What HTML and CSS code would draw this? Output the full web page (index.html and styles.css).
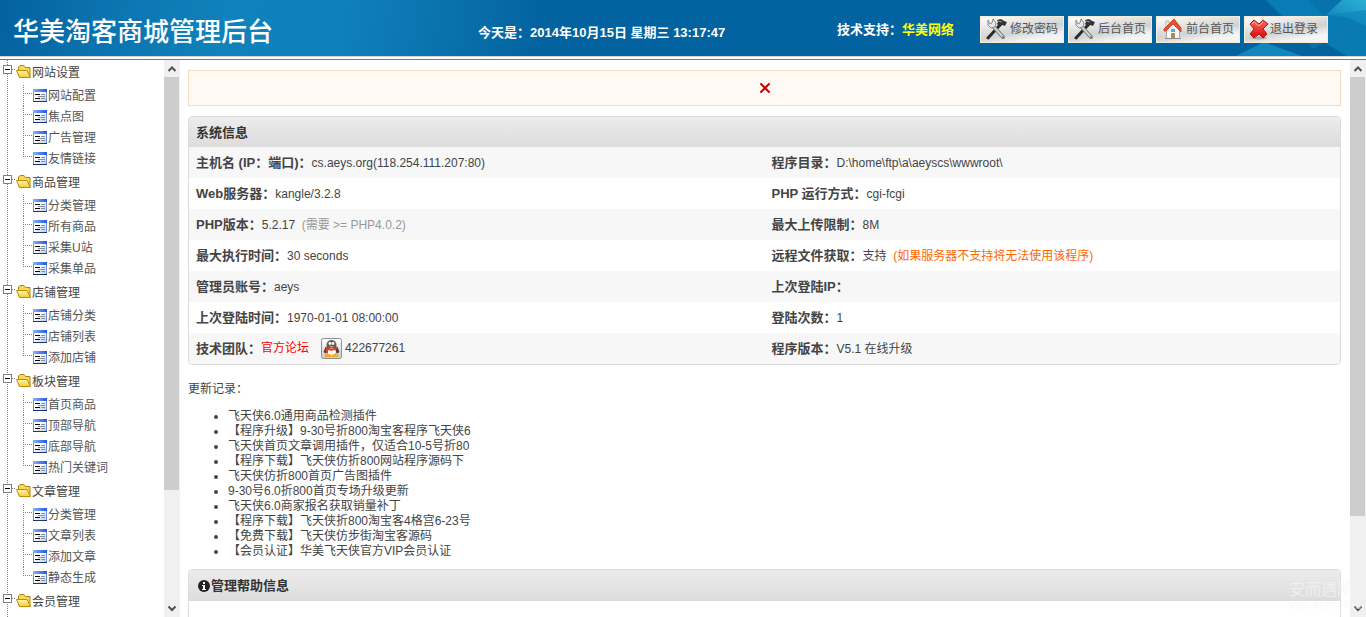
FILE: index.html
```html
<!DOCTYPE html>
<html lang="zh-CN">
<head>
<meta charset="utf-8">
<title>华美淘客商城管理后台</title>
<link rel="stylesheet" href="styles.css">
</head>
<body>
<svg class="defs" aria-hidden="true">
  <defs>
    <linearGradient id="gold" x1="0" y1="0" x2="0" y2="1"><stop offset="0" stop-color="#fffab4"/><stop offset="1" stop-color="#f8c830"/></linearGradient>
    <linearGradient id="bar" x1="0" y1="0" x2="1" y2="0"><stop offset="0" stop-color="#86b4fa"/><stop offset="1" stop-color="#2458e0"/></linearGradient>
    <linearGradient id="page" x1="0" y1="0" x2="1" y2="1"><stop offset="0.4" stop-color="#fff"/><stop offset="1" stop-color="#b8cdf0"/></linearGradient>
    <linearGradient id="red" x1="0" y1="0" x2="0" y2="1"><stop offset="0" stop-color="#ff6a60"/><stop offset="1" stop-color="#d80808"/></linearGradient>
    <linearGradient id="key" x1="0" y1="0" x2="0" y2="1"><stop offset="0" stop-color="#fff"/><stop offset="1" stop-color="#c9c9c9"/></linearGradient>
    <linearGradient id="ray" x1="1" y1="0" x2="0" y2="1"><stop offset="0" stop-color="#2bb0d6"/><stop offset="1" stop-color="#0c80b8"/></linearGradient>
  </defs>
  <symbol id="folder" viewBox="0 0 32 20">
    <path d="M12 7.500h4" stroke="#808080" stroke-dasharray="1 1"/>
    <rect x="3.500" y="3.500" width="8" height="8" fill="#fff" stroke="#808080"/>
    <path d="M5 7.500h5" stroke="#000"/>
    <path d="M18.500 14V5l1.500-1.500h4l1.500 2h4.500V15z" fill="#f8d858" stroke="#b08410"/>
    <path d="M19.500 15.500L16.500 8.500h10.500l3.500 7z" fill="url(#gold)" stroke="#c08c08" stroke-linejoin="round"/>
  </symbol>
  <symbol id="leaf" viewBox="0 0 48 21">
    <path d="M25 8.500h8" stroke="#808080" stroke-dasharray="1 1"/>
    <rect x="33.500" y="4.500" width="13" height="12" fill="url(#page)" stroke="#6f92cf"/>
    <rect x="33" y="4" width="14" height="3" fill="url(#bar)"/>
    <path d="M35 9.500h5M35 13.500h5" stroke="#000"/>
    <path d="M41 9.500h4M38 11.500h7M41 13.500h4" stroke="#8a8f98"/>
    <path d="M33 16.500h14" stroke="#1d3567"/>
  </symbol>
  <symbol id="tools" viewBox="0 0 22 22">
    <path d="M2 20L14 7" stroke="#2a2a2a" stroke-width="3" stroke-linecap="round"/>
    <path d="M11 2c3-1 5-1 7 1l3 1-2 4-3-1-2 2-3-3 1-2z" fill="#333"/>
    <path d="M12 3l4 1" stroke="#999"/>
    <path d="M6 7l11 12" stroke="#777" stroke-width="4" stroke-linecap="round"/>
    <path d="M6 7l11 12" stroke="#d2d2d2" stroke-width="2" stroke-linecap="round"/>
    <path d="M2 2v5l3 3 4-1 1-4-3-4-1 4-2 1z" fill="#e9e9e9" stroke="#8c8c8c"/>
    <circle cx="17" cy="19" r="1" fill="#777"/>
  </symbol>
  <symbol id="home" viewBox="0 0 22 22">
    <path d="M4 3h3v6H4z" fill="#e9e9e9" stroke="#b8b8b8"/>
    <path d="M4.500 11L12 5l5.500 6v9.500h-13z" fill="#f7f7f7" stroke="#a9a9a9"/>
    <path d="M2 13v-2L12 1l7 9v4l-8-8-7 7z" fill="#e8502e" stroke="#c94a2c" stroke-linejoin="round"/>
    <path d="M9 11h4v3H9z" fill="#58a8e8"/>
    <path d="M9 15h4v5H9z" fill="#b88850"/>
    <path d="M3 20.500h16" stroke="#8e8e8e"/>
  </symbol>
  <symbol id="cross" viewBox="0 0 22 22">
    <ellipse cx="11" cy="20" rx="8" ry="1.500" fill="#aaa"/>
    <path d="M2 6l4-4 5 4 4-4 5 4-5 5 4 5-4 4-4-4-5 4-4-4 4-5z" fill="url(#red)" stroke="#b81414" stroke-linejoin="round"/>
    <path d="M4 6l2-2 5 4 4-4" fill="none" stroke="#ffaca4"/>
  </symbol>
  <symbol id="up" viewBox="0 0 16 17"><path d="M4.500 11L8 7.500l3.500 3.500" fill="none" stroke="#505050" stroke-width="2"/></symbol>
  <symbol id="down" viewBox="0 0 16 17"><path d="M4.500 6.500L8 10l3.500-3.500" fill="none" stroke="#505050" stroke-width="2"/></symbol>
</svg>

<header class="top">
  <svg class="top-art" viewBox="0 0 160 56" preserveAspectRatio="xMaxYMid slice" aria-hidden="true">
    <path d="M60 0h100v56h-46z" fill="#0a78b0" opacity=".75"/>
    <path d="M60 0h42l17 16-14 26z" fill="#0d84bb" opacity=".6"/>
    <path d="M136 0h24v26l-20-9-20-2z" fill="url(#ray)"/>
    <path d="M119 15l41-5v46h-18L118 42l-14-12z" fill="#0d80b6" opacity=".6"/>
    <path d="M30 56l28-14 38 14z" fill="#1590c0" opacity=".8"/>
    <path d="M98 56l20-14 22 14z" fill="#0362a0"/>
  </svg>
  <h1 class="brand">华美淘客商城管理后台</h1>
  <p class="clock">今天是：2014年10月15日 星期三 13:17:47</p>
  <p class="support">技术支持：<a href="#">华美网络</a></p>
  <nav class="actions">
    <button type="button" class="action"><svg class="action-icon"><use href="#tools"/></svg>修改密码</button>
    <button type="button" class="action"><svg class="action-icon"><use href="#tools"/></svg>后台首页</button>
    <button type="button" class="action"><svg class="action-icon"><use href="#home"/></svg>前台首页</button>
    <button type="button" class="action action-exit"><svg class="action-icon"><use href="#cross"/></svg>退出登录</button>
  </nav>
</header>

<div class="frames">
  <nav class="side">
    <ul class="tree">
      <li><a class="group" href="#"><svg class="group-icon"><use href="#folder"/></svg><span>网站设置</span></a>
        <ul class="leaves">
          <li><a href="#"><svg class="leaf-icon"><use href="#leaf"/></svg><span>网站配置</span></a></li>
          <li><a href="#"><svg class="leaf-icon"><use href="#leaf"/></svg><span>焦点图</span></a></li>
          <li><a href="#"><svg class="leaf-icon"><use href="#leaf"/></svg><span>广告管理</span></a></li>
          <li><a href="#"><svg class="leaf-icon"><use href="#leaf"/></svg><span>友情链接</span></a></li>
        </ul></li>
      <li><a class="group" href="#"><svg class="group-icon"><use href="#folder"/></svg><span>商品管理</span></a>
        <ul class="leaves">
          <li><a href="#"><svg class="leaf-icon"><use href="#leaf"/></svg><span>分类管理</span></a></li>
          <li><a href="#"><svg class="leaf-icon"><use href="#leaf"/></svg><span>所有商品</span></a></li>
          <li><a href="#"><svg class="leaf-icon"><use href="#leaf"/></svg><span>采集U站</span></a></li>
          <li><a href="#"><svg class="leaf-icon"><use href="#leaf"/></svg><span>采集单品</span></a></li>
        </ul></li>
      <li><a class="group" href="#"><svg class="group-icon"><use href="#folder"/></svg><span>店铺管理</span></a>
        <ul class="leaves">
          <li><a href="#"><svg class="leaf-icon"><use href="#leaf"/></svg><span>店铺分类</span></a></li>
          <li><a href="#"><svg class="leaf-icon"><use href="#leaf"/></svg><span>店铺列表</span></a></li>
          <li><a href="#"><svg class="leaf-icon"><use href="#leaf"/></svg><span>添加店铺</span></a></li>
        </ul></li>
      <li><a class="group" href="#"><svg class="group-icon"><use href="#folder"/></svg><span>板块管理</span></a>
        <ul class="leaves">
          <li><a href="#"><svg class="leaf-icon"><use href="#leaf"/></svg><span>首页商品</span></a></li>
          <li><a href="#"><svg class="leaf-icon"><use href="#leaf"/></svg><span>顶部导航</span></a></li>
          <li><a href="#"><svg class="leaf-icon"><use href="#leaf"/></svg><span>底部导航</span></a></li>
          <li><a href="#"><svg class="leaf-icon"><use href="#leaf"/></svg><span>热门关键词</span></a></li>
        </ul></li>
      <li><a class="group" href="#"><svg class="group-icon"><use href="#folder"/></svg><span>文章管理</span></a>
        <ul class="leaves">
          <li><a href="#"><svg class="leaf-icon"><use href="#leaf"/></svg><span>分类管理</span></a></li>
          <li><a href="#"><svg class="leaf-icon"><use href="#leaf"/></svg><span>文章列表</span></a></li>
          <li><a href="#"><svg class="leaf-icon"><use href="#leaf"/></svg><span>添加文章</span></a></li>
          <li><a href="#"><svg class="leaf-icon"><use href="#leaf"/></svg><span>静态生成</span></a></li>
        </ul></li>
      <li><a class="group" href="#"><svg class="group-icon"><use href="#folder"/></svg><span>会员管理</span></a></li>
    </ul>
    <div class="scroll" aria-hidden="true">
      <svg class="scroll-arrow"><use href="#up"/></svg>
      <div class="scroll-track"><div class="scroll-thumb" style="height:79%"></div></div>
      <svg class="scroll-arrow"><use href="#down"/></svg>
    </div>
  </nav>

  <div class="content">
    <main class="main">
      <div class="notice"><svg class="notice-icon" viewBox="0 0 12 12" role="img" aria-label="关闭"><path d="M2 2l8 8M10 2L2 10" stroke="#c00" stroke-width="2" stroke-linecap="round" fill="none"/></svg></div>

      <section class="panel">
        <h2 class="panel-head">系统信息</h2>
        <table class="info">
          <tr><td><b>主机名 (IP：端口)：</b>cs.aeys.org(118.254.111.207:80)</td><td><b>程序目录：</b>D:\home\ftp\a\aeyscs\wwwroot\</td></tr>
          <tr><td><b>Web服务器：</b>kangle/3.2.8</td><td><b>PHP 运行方式：</b>cgi-fcgi</td></tr>
          <tr><td><b>PHP版本：</b>5.2.17 &nbsp;<span class="muted">(需要 &gt;= PHP4.0.2)</span></td><td><b>最大上传限制：</b>8M</td></tr>
          <tr><td><b>最大执行时间：</b>30 seconds</td><td><b>远程文件获取：</b>支持 &nbsp;<span class="warn">(如果服务器不支持将无法使用该程序)</span></td></tr>
          <tr><td><b>管理员账号：</b>aeys</td><td><b>上次登陆IP：</b></td></tr>
          <tr><td><b>上次登陆时间：</b>1970-01-01 08:00:00</td><td><b>登陆次数：</b>1</td></tr>
          <tr><td><div class="team"><b>技术团队：</b><a class="forum" href="#">官方论坛</a>
            <a class="qq" href="#"><svg class="qq-icon" viewBox="0 0 21 21" aria-hidden="true">
              <rect x=".5" y=".5" width="20" height="20" rx="2" fill="url(#key)" stroke="#8e8e8e"/>
              <path d="M5 9l-2 5 2 1M16 9l2 5-2 1" fill="#444" stroke="#444"/>
              <ellipse cx="10.500" cy="12" rx="6" ry="6" fill="#444"/>
              <ellipse cx="10.500" cy="7" rx="5" ry="5" fill="#5a606a"/>
              <ellipse cx="10.500" cy="14" rx="4.500" ry="4" fill="#fff"/>
              <circle cx="9" cy="5.500" r="1.400" fill="#fff"/><circle cx="12" cy="5.500" r="1.400" fill="#fff"/>
              <path d="M8 8h5l-2.500 1.500z" fill="#f8a818"/>
              <path d="M5 9q5.500 3 11 0v2q-5 3-9 1v3H5z" fill="#e8382c"/>
              <ellipse cx="7" cy="17.500" rx="3.500" ry="1.500" fill="#f8a818"/><ellipse cx="14" cy="17.500" rx="3.500" ry="1.500" fill="#f8a818"/>
            </svg>422677261</a></div></td><td><b>程序版本：</b>V5.1 <a href="#">在线升级</a></td></tr>
        </table>
      </section>

      <p class="log-title">更新记录：</p>
      <ul class="log">
        <li>飞天侠6.0通用商品检测插件</li>
        <li>【程序升级】9-30号折800淘宝客程序飞天侠6</li>
        <li>飞天侠首页文章调用插件，仅适合10-5号折80</li>
        <li>【程序下载】飞天侠仿折800网站程序源码下</li>
        <li>飞天侠仿折800首页广告图插件</li>
        <li>9-30号6.0折800首页专场升级更新</li>
        <li>飞天侠6.0商家报名获取销量补丁</li>
        <li>【程序下载】飞天侠折800淘宝客4格宫6-23号</li>
        <li>【免费下载】飞天侠仿步街淘宝客源码</li>
        <li>【会员认证】华美飞天侠官方VIP会员认证</li>
      </ul>

      <section class="panel panel-help">
        <h2 class="panel-head"><svg class="info-icon" viewBox="0 0 14 14" aria-hidden="true"><circle cx="7" cy="7" r="6" fill="#222"/><path d="M6 3h2v2H6zM5 6h3v4h1v1H5v-1h1V7H5z" fill="#fff"/></svg>管理帮助信息</h2>
      </section>
    </main>
    <div class="scroll" aria-hidden="true">
      <svg class="scroll-arrow"><use href="#up"/></svg>
      <div class="scroll-track"><div class="scroll-thumb" style="height:84%"></div></div>
      <svg class="scroll-arrow"><use href="#down"/></svg>
    </div>
    <div class="stamp" aria-hidden="true"><span class="stamp-name">安而遇随</span><span class="stamp-url">WWW.AEYS.ORG</span></div>
  </div>
</div>
</body>
</html>
```
FILE: styles.css
```css
* { box-sizing: border-box; }

body {
  margin: 0;
  height: 100vh;
  display: flex;
  flex-direction: column;
  overflow: hidden;
  background: #fff;
  color: #444;
  font: 12px/15px "Liberation Sans", Arial, "Noto Sans CJK SC", sans-serif;
}

h1, h2, p, ul { margin: 0; padding: 0; }
ul { list-style: none; }
a { color: inherit; text-decoration: none; }
.defs { position: absolute; width: 0; height: 0; }

/* header */
.top {
  position: relative;
  flex: none;
  display: grid;
  grid-template-columns: 36% 1fr auto auto;
  align-items: center;
  height: 57px;
  padding-right: 38px;
  border-bottom: 1px solid #d8d4d0;
  background: linear-gradient(100deg, #0461a0 0%, #0b74b0 8%, #1082bb 17%, #0f80ba 25%, #0971ad 33%, #0362a0 40%, #0362a0 100%);
  color: #fff;
  font-size: 13px;
  font-weight: bold;
}
.top-art { position: absolute; right: 0; top: 0; width: 160px; height: 56px; }
.brand { padding: 4px 0 0 13px; font: 500 26px/40px "Noto Sans CJK SC", sans-serif; }
.clock { padding-top: 9px; }
.support { padding: 2px 26px 0 0; }
.support a { color: #ff0; }
.actions { position: relative; display: flex; gap: 4px; padding-top: 2px; }
.action {
  display: flex;
  align-items: center;
  justify-content: center;
  gap: 2px;
  width: 84px;
  height: 27px;
  padding: 0;
  border: 1px solid #f4ecd4;
  background: linear-gradient(170deg, #f6f6f6 10%, #d2d2d2 55%, #f4f4f4 80%);
  color: #555;
  font: inherit;
  font-size: 12px;
  font-weight: normal;
}
.action-exit { gap: 0; padding: 0 6px 0 0; }
.action-icon { flex: none; width: 22px; height: 22px; }

/* frames */
.frames {
  flex: 1;
  min-height: 0;
  display: flex;
  margin-top: 2px;
  border-top: 1px solid #77777c;
}
.side { flex: none; width: 180px; display: flex; overflow: hidden; }
.content { position: relative; flex: 1; min-width: 0; display: flex; overflow: hidden; }

/* tree */
.tree {
  flex: 1;
  padding-top: 2px;
  background: repeating-linear-gradient(#808080 0 1px, transparent 1px 2px) 7px 0 / 1px 100% no-repeat;
}
.tree span { padding-top: 2px; }
.group { display: flex; align-items: center; height: 20px; }
.group-icon { flex: none; width: 32px; height: 20px; }
.leaves { padding: 3px 0; }
.leaves li { background: repeating-linear-gradient(#808080 0 1px, transparent 1px 2px) 23px 0 / 1px 100% no-repeat; }
.leaves li:last-child { background-size: 1px 9px; }
.leaves a { display: flex; align-items: center; height: 21px; color: #555; }
.leaf-icon { flex: none; width: 48px; height: 21px; }

/* scroll bars */
.scroll { flex: none; display: flex; flex-direction: column; width: 16px; background: #f0f0f0; }
.scroll-arrow { flex: none; width: 16px; height: 17px; }
.scroll-track { flex: 1; }
.scroll-thumb { width: 15px; background: #cdcdcd; }

/* main */
.main { flex: 1; min-width: 0; padding: 10px 9px 0 8px; }
.notice {
  display: flex;
  align-items: center;
  justify-content: center;
  height: 36px;
  margin-bottom: 10px;
  border: 1px solid #f5dabc;
  background: #fffaf3;
}
.notice-icon { width: 12px; height: 12px; }
.panel { border: 1px solid #dcdcdc; border-radius: 4px; overflow: hidden; }
.panel-head {
  display: flex;
  align-items: center;
  height: 30px;
  padding: 0 7px;
  background: linear-gradient(#ececec, #dcdcdc);
  color: #333;
  font-size: 13px;
}
.info { width: 100%; table-layout: fixed; border-collapse: collapse; }
.info td { height: 31px; padding: 0 7px; }
.info tr:nth-child(odd) { background: #f7f7f7; }
.info b { font-size: 13px; }
.muted { color: #999; }
.warn { color: #f60; }
.team, .qq { display: flex; align-items: center; }
.forum { color: #f00; margin-right: 12px; }
.qq { gap: 3px; }
.qq-icon { width: 21px; height: 21px; }

.log-title { margin: 17px 0 12px; }
.log { padding-left: 40px; list-style: disc; }
.panel-help { height: 200px; margin-top: 10px; }
.panel-help .panel-head { height: 31px; }
.info-icon { width: 14px; height: 14px; margin-left: 1px; }

.stamp {
  position: absolute;
  right: 5px;
  bottom: 4px;
  display: flex;
  flex-direction: column;
  gap: 1px;
  color: #f8f8f8;
  opacity: .6;
}
.stamp-name { font-family: "Noto Sans CJK SC", sans-serif; font-size: 16px; line-height: 24px; }
.stamp-url { font: bold 10px/12px "Liberation Mono", monospace; }
```
